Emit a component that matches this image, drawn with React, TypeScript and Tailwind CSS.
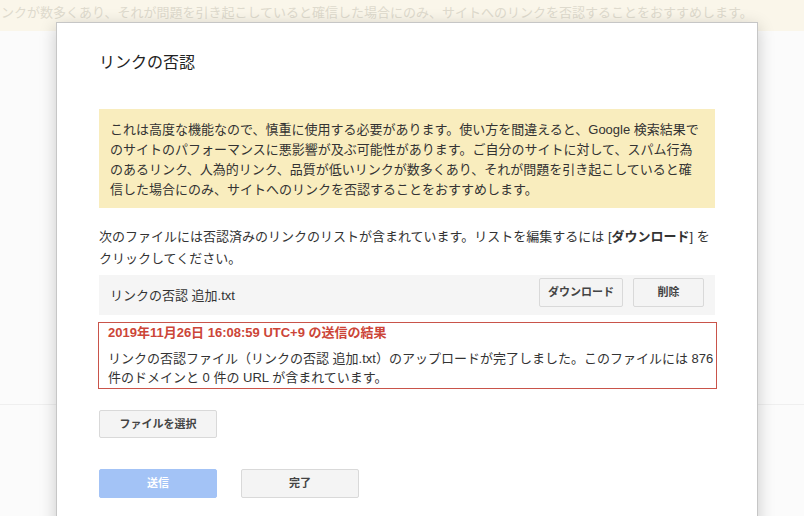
import React from 'react';

const font = "font-['Liberation_Sans','Arial','Noto_Sans_CJK_JP',sans-serif]";

const Btn: React.FC<{ label: string; className?: string }> = ({ label, className = '' }) => (
  <button
    className={`h-[29px] flex items-center justify-center rounded-[2px] border text-[11px] font-bold ${className}`}
  >
    {label}
  </button>
);

const greyBtn = 'border-[#d9d9d9] bg-[#f4f4f4] text-[#444]';

export default function App() {
  return (
    <div className={`relative w-[804px] h-[516px] overflow-hidden bg-[#fbfbfb] ${font}`}>
      {/* page behind the dialog */}
      <div className="h-[31px] bg-[#faf6ea] overflow-hidden whitespace-nowrap">
        <p className="pl-[1px] pt-[4px] text-[13px] leading-[18px] text-[#dedacd]">
          ンクが数多くあり、それが問題を引き起こしていると確信した場合にのみ、サイトへのリンクを否認することをおすすめします。
        </p>
      </div>
      <div className="h-[373px]" />
      <div className="h-px bg-[#efefef]" />

      {/* dialog */}
      <div className="absolute left-[56px] top-[22px] w-[702px] h-[540px] bg-white border border-[#c6c6c6] shadow-[0_4px_16px_rgba(0,0,0,0.2)] pl-[42px] pt-[30px] text-[#222]">
        <h1 className="text-[16px] leading-[20px] text-[#222]">リンクの否認</h1>

        <div className="mt-[36px] w-[616px] bg-[#f9edbe] pl-[11px] pt-[11px] pb-[8px] text-[13px] leading-[20px] text-[#333]">
          これは高度な機能なので、慎重に使用する必要があります。使い方を間違えると、Google 検索結果で
          <br />
          のサイトのパフォーマンスに悪影響が及ぶ可能性があります。ご自分のサイトに対して、スパム行為
          <br />
          のあるリンク、人為的リンク、品質が低いリンクが数多くあり、それが問題を引き起こしていると確
          <br />
          信した場合にのみ、サイトへのリンクを否認することをおすすめします。
        </div>

        <p className="mt-[18px] text-[13px] leading-[22px] text-[#333]">
          次のファイルには否認済みのリンクのリストが含まれています。リストを編集するには [<b>ダウンロード</b>] を
          <br />
          クリックしてください。
        </p>

        <div className="mt-[5px] w-[616px] h-[40px] bg-[#f5f5f5] flex items-center pl-[11px] pr-[11px]">
          <span className="flex-1 text-[13px] text-[#333] pt-[2px]">リンクの否認 追加.txt</span>
          <div className="flex gap-[10px] -mt-[6px]">
            <Btn label="ダウンロード" className={`w-[84px] ${greyBtn}`} />
            <Btn label="削除" className={`w-[71px] ${greyBtn}`} />
          </div>
        </div>

        <div className="mt-[7px] -ml-px w-[619px] border border-[#c9544a] pl-[9px] pt-px pb-px">
          <div className="text-[13px] leading-[18px] font-bold text-[#cc4538]">
            2019年11月26日 16:08:59 UTC+9 の送信の結果
          </div>
          <div className="mt-[7px] text-[13px] leading-[19px] text-[#333]">
            リンクの否認ファイル（リンクの否認 追加.txt）のアップロードが完了しました。このファイルには 876
            <br />
            件のドメインと 0 件の URL が含まれています。
          </div>
        </div>

        <Btn label="ファイルを選択" className={`mt-[21px] w-[118px] !h-[28px] ${greyBtn}`} />

        <div className="mt-[31px] flex gap-[24px]">
          <Btn label="送信" className="w-[118px] border-[#a3c3f6] bg-[#a3c3f6] text-white" />
          <Btn label="完了" className={`w-[118px] ${greyBtn}`} />
        </div>
      </div>
    </div>
  );
}
